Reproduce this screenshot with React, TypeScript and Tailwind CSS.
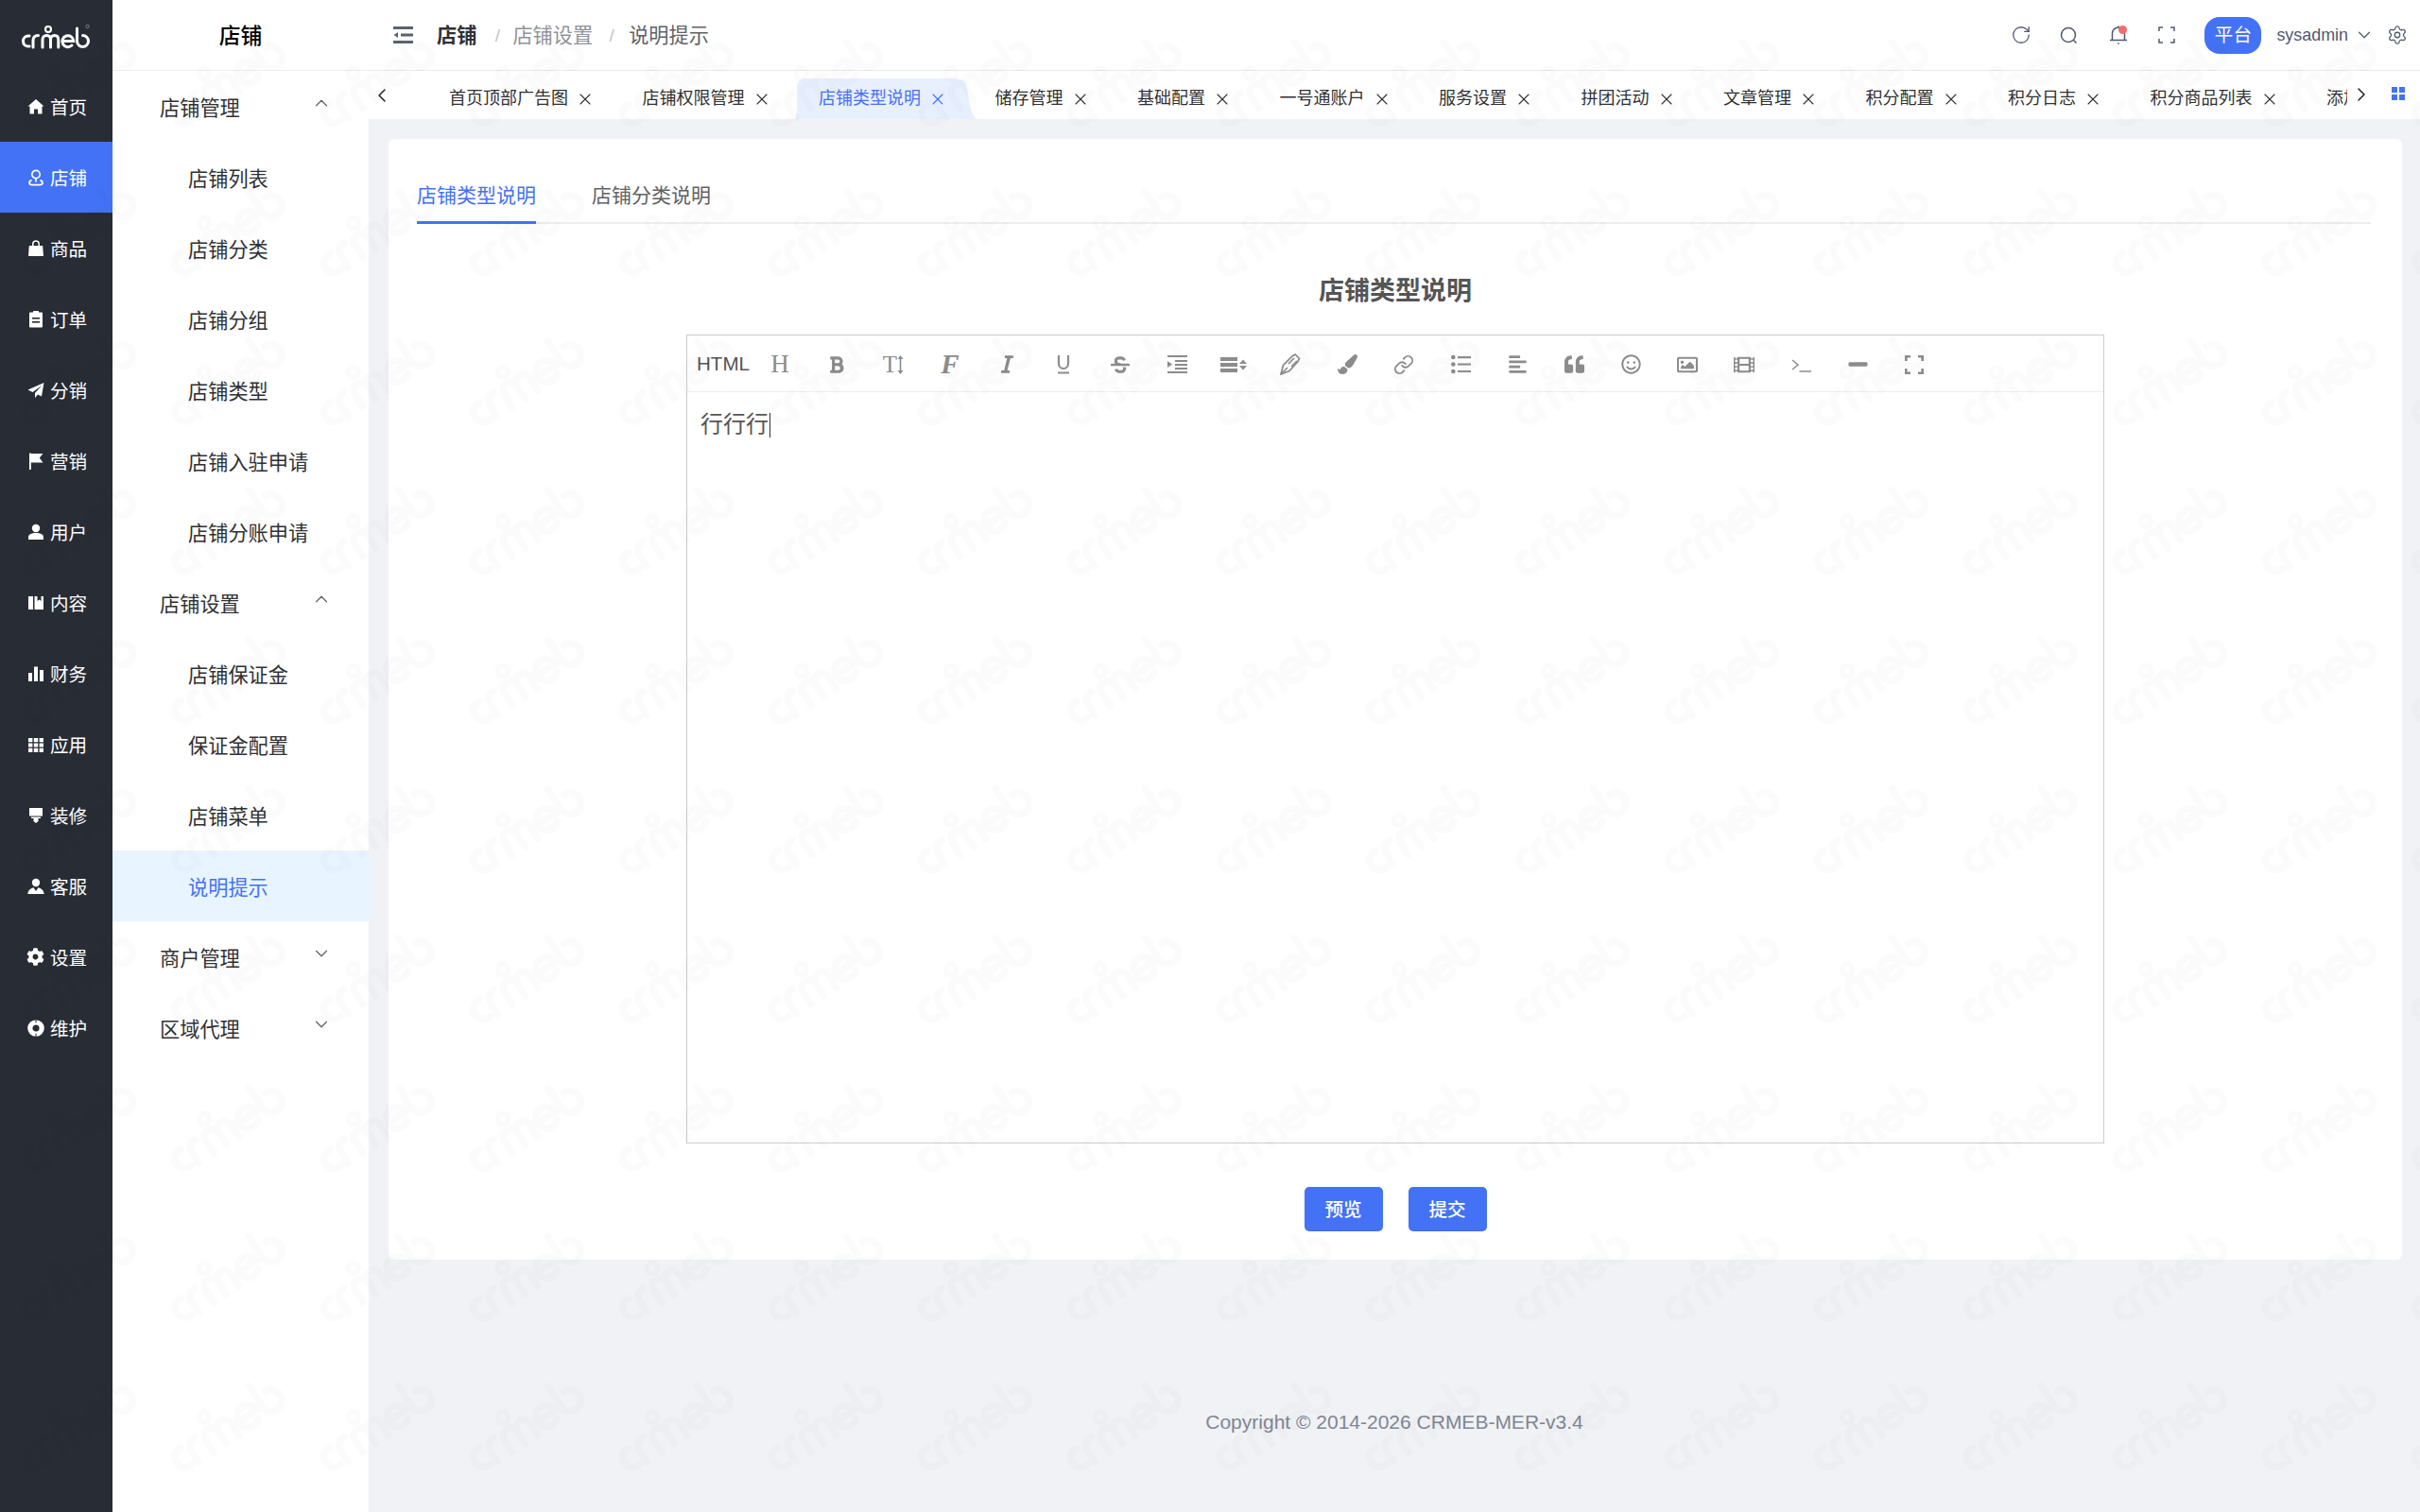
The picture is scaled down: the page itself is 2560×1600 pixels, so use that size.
import type { ReactNode } from "react";
import { ChevronDown, ChevronLeft, ChevronRight, ChevronUp, Link, RotateCw, Settings, X } from "lucide-react";
import {
  FaAlignLeft,
  FaBold,
  FaCog,
  FaFilm,
  FaItalic,
  FaMinus,
  FaPaintBrush,
  FaQuoteLeft,
  FaRegImage,
  FaRegSmile,
  FaStrikethrough,
} from "react-icons/fa";

function Glyph({ children }: { children: ReactNode }) {
  return (
    <svg width="18" height="18" viewBox="0 0 18 18" fill="#fff" className="shrink-0">
      {children}
    </svg>
  );
}

const railItems: { label: string; icon: ReactNode; active?: boolean }[] = [
  { label: "首页", icon: <Glyph><path d="M9 1 17.5 8.5H15.5V16.5H11V11.5H7V16.5H2.5V8.5H.5Z" /></Glyph> },
  {
    label: "店铺",
    active: true,
    icon: (
      <Glyph>
        <g fill="none" stroke="#fff" strokeWidth="1.7">
          <circle cx="9" cy="5.5" r="4.2" />
          <path d="M9 10v3.4M4.5 11.6C1 13 1.3 16.4 5 16.6H13C16.7 16.4 17 13 13.500 11.600" />
        </g>
      </Glyph>
    ),
  },
  {
    label: "商品",
    icon: (
      <Glyph>
        <path d="M1.800 6H16.200L17 17H1Z" />
        <path d="M5.800 6.500V4.200A3.200 3.200 0 0 1 12.200 4.200V6.500" fill="none" stroke="#fff" strokeWidth="1.500" />
      </Glyph>
    ),
  },
  {
    label: "订单",
    icon: (
      <Glyph>
        <rect x="2" y="1.500" width="14" height="16" rx="1" />
        <rect x="6" y="0" width="6" height="3" rx=".5" />
        <rect x="5" y="7" width="8" height="1.600" fill="#282c35" />
        <rect x="5" y="11" width="8" height="1.600" fill="#282c35" />
      </Glyph>
    ),
  },
  { label: "分销", icon: <Glyph><path d="M17.500 1 .5 8.500 5.500 11 15 4 8 12V17L11 13.500 15 15.500Z" /></Glyph> },
  { label: "营销", icon: <Glyph><path d="M2 .5H3.800V18H2ZM3.800 1H16.500L12.800 5.500 16.500 10.500H3.800Z" /></Glyph> },
  {
    label: "用户",
    icon: (
      <Glyph>
        <circle cx="9" cy="5" r="4.200" />
        <path d="M1 17V14.500C1 11.500 4 10 9 10S17 11.500 17 14.500V17Z" />
      </Glyph>
    ),
  },
  { label: "内容", icon: <Glyph><path d="M1 2H6V16H1ZM7.500 2H10.500V7L12.500 5.500 14.500 7V2H17V16H7.500Z" /></Glyph> },
  {
    label: "财务",
    icon: (
      <Glyph>
        <rect x="1" y="8" width="4" height="9" />
        <rect x="7" y="1.500" width="4" height="15.500" />
        <rect x="13" y="5" width="4" height="12" />
      </Glyph>
    ),
  },
  {
    label: "应用",
    icon: (
      <Glyph>
        <path d="M1 2H5.400V6.200H1ZM6.800 2H11.200V6.200H6.800ZM12.600 2H17V6.200H12.600ZM1 7.400H5.400V11.600H1ZM6.800 7.400H11.200V11.600H6.800ZM12.600 7.400H17V11.600H12.600ZM1 12.800H5.400V17H1ZM6.800 12.800H11.200V17H6.800ZM12.600 12.800H17V17H12.600Z" />
      </Glyph>
    ),
  },
  { label: "装修", icon: <Glyph><path d="M2 1H16V9.500H2ZM4 10.500H14V12H11.500V15L9 17 6.500 15V12H4Z" /></Glyph> },
  {
    label: "客服",
    icon: (
      <Glyph>
        <circle cx="9" cy="5" r="4.200" />
        <path d="M.3 17C.8 12.500 4 10.800 6.500 10.200L9 14 11.500 10.200C14 10.800 17.200 12.500 17.700 17Z" />
      </Glyph>
    ),
  },
  { label: "设置", icon: <FaCog className="-ml-[1px] h-[19px] w-[19px] shrink-0 text-white" /> },
  {
    label: "维护",
    icon: (
      <Glyph>
        <circle cx="9" cy="9" r="6.200" fill="none" stroke="#fff" strokeWidth="5.200" />
        <path d="M9 0V3.400M9 14.600V18" stroke="#282c35" strokeWidth="1" />
      </Glyph>
    ),
  },
];

type MenuRow = { label: string; kind: "group" | "item"; open?: boolean; active?: boolean };

const menuRows: MenuRow[] = [
  { label: "店铺管理", kind: "group", open: true },
  { label: "店铺列表", kind: "item" },
  { label: "店铺分类", kind: "item" },
  { label: "店铺分组", kind: "item" },
  { label: "店铺类型", kind: "item" },
  { label: "店铺入驻申请", kind: "item" },
  { label: "店铺分账申请", kind: "item" },
  { label: "店铺设置", kind: "group", open: true },
  { label: "店铺保证金", kind: "item" },
  { label: "保证金配置", kind: "item" },
  { label: "店铺菜单", kind: "item" },
  { label: "说明提示", kind: "item", active: true },
  { label: "商户管理", kind: "group" },
  { label: "区域代理", kind: "group" },
];

const tabs = [
  "首页顶部广告图",
  "店铺权限管理",
  "店铺类型说明",
  "储存管理",
  "基础配置",
  "一号通账户",
  "服务设置",
  "拼团活动",
  "文章管理",
  "积分配置",
  "积分日志",
  "积分商品列表",
  "添加",
];

// crmeb wordmark, also used for the page watermark
function LogoStrokes({ width = 3 }: { width?: number }) {
  return (
    <g fill="none" stroke="currentColor" strokeWidth={width} strokeLinecap="round">
      <path d="M8 13C4 12.500 1.500 15 1.500 18.500S4 24.500 8 24" />
      <path d="M12 25V18C12 14.500 14 12.500 17.500 12.500" />
      <path d="M22 25V17C22 14 24 12.500 26.300 12.500S30.500 14 30.500 17V25M30.500 17C30.500 14 32.500 12.500 34.700 12.500S38.800 14 38.800 17V25" />
      <path d="M42.800 18.500H54.800A6 6 0 1 0 53 23" />
      <path d="M58.500 5V18.500A6 6 0 1 0 64.500 12.500" />
      <circle cx="28" cy="6" r="3" strokeWidth={width * 0.72} />
    </g>
  );
}

function Watermark() {
  return (
    <svg className="pointer-events-none absolute inset-0 z-50 h-full w-full text-black opacity-[0.013]">
      <defs>
        <pattern id="wm" width="158" height="158" y="5" patternUnits="userSpaceOnUse">
          <g transform="translate(80 79) rotate(-33) scale(1.9) translate(-36 -15)">
            <LogoStrokes width={3.8} />
          </g>
        </pattern>
      </defs>
      <rect width="100%" height="100%" fill="url(#wm)" />
    </svg>
  );
}

function Rail() {
  return (
    <aside className="flex w-[119px] shrink-0 flex-col bg-[#282c35]">
      <div className="flex h-[75px] items-start pl-[23px] pt-[25px] text-white">
        <svg width="74" height="27" viewBox="0 0 74 27">
          <LogoStrokes />
          <circle cx="69.500" cy="3" r="1.700" fill="none" stroke="#fff" strokeOpacity=".5" strokeWidth=".7" />
        </svg>
      </div>
      {railItems.map((item) => (
        <div
          key={item.label}
          className={`flex h-[75px] items-center gap-[6px] pl-[29px] text-[19.6px] text-white ${item.active ? "bg-[#4372f6]" : ""}`}
        >
          {item.icon}
          <span className="pt-[4px]">{item.label}</span>
        </div>
      ))}
    </aside>
  );
}

function SubMenu() {
  return (
    <aside className="flex w-[271px] shrink-0 flex-col bg-white">
      <div className="flex h-[75px] items-center justify-center border-b border-[#eee] pt-[2px] text-[22.800px] font-medium text-black">
        店铺
      </div>
      {menuRows.map((row) => (
        <div
          key={row.label}
          className={`flex h-[75px] items-center pt-[4px] text-[21.200px] ${
            row.kind === "group" ? "pl-[50px]" : "pl-[80px]"
          } ${row.active ? "bg-[#e8f4ff] text-[#4372f6]" : "text-[#303133]"}`}
        >
          <span>{row.label}</span>
          {row.kind === "group" &&
            (row.open ? (
              <ChevronUp strokeWidth={1.3} className="ml-auto mr-[39px] h-[22px] w-[22px] -translate-y-[6px] text-[#606266]" />
            ) : (
              <ChevronDown strokeWidth={1.3} className="ml-auto mr-[39px] h-[22px] w-[22px] -translate-y-[6px] text-[#606266]" />
            ))}
        </div>
      ))}
    </aside>
  );
}

function Header() {
  return (
    <header className="flex h-[75px] shrink-0 items-center border-b border-[#e8e8e8] bg-white pl-[26px]">
      <svg width="21" height="18" viewBox="0 0 21 18" className="mr-[25px] shrink-0">
        <path d="M0 0H21V3H0ZM8 7.500H21V10.500H8ZM0 15H21V18H0ZM5 6V12L.5 9Z" fill="#5c6270" />
      </svg>
      <span className="pt-[2px] text-[21.200px] font-semibold text-[#303133]">店铺</span>
      <span className="ml-[19px] mr-[13px] w-[6px] pt-[2px] text-center text-[19px] text-[#c0c4cc]">/</span>
      <span className="pt-[2px] text-[21.200px] text-[#909399]">店铺设置</span>
      <span className="ml-[17px] mr-[15px] w-[6px] pt-[2px] text-center text-[19px] text-[#c0c4cc]">/</span>
      <span className="pt-[2px] text-[21.200px] text-[#606266]">说明提示</span>

      <RotateCw strokeWidth={1.4} className="ml-auto h-[22px] w-[22px] text-[#515a6e]" />
      <svg width="19" height="19" viewBox="0 0 19 19" fill="none" stroke="#515a6e" strokeWidth="1.500" className="ml-[30px]">
        <circle cx="9" cy="9" r="7.500" />
        <path d="M14.500 14.500 17.500 17.500" />
      </svg>
      <div className="relative ml-[33px] h-[22px] w-[20px]">
        <svg width="20" height="22" viewBox="0 0 20 22" fill="none" stroke="#515a6e" strokeWidth="1.500">
          <path d="M3.500 16V9.500A6.500 6.500 0 0 1 16.500 9.500V16M1 16.500H19M10 1.500V3M9.200 20H10.800" />
        </svg>
        <span className="absolute left-[10px] top-[1px] h-[9px] w-[9px] rounded-full bg-[#f56c6c]" />
      </div>
      <svg width="18" height="18" viewBox="0 0 18 18" fill="none" stroke="#515a6e" strokeWidth="1.500" className="ml-[32px]">
        <path d="M1 5V1H5M13 1H17V5M17 13V17H13M5 17H1V13" />
      </svg>
      <div className="ml-[31px] flex h-[39px] w-[60px] items-center justify-center rounded-[16px] bg-[#4372f6] pt-[1px] text-[19.600px] text-white">
        平台
      </div>
      <span className="ml-[16px] text-[17.900px] text-[#515a6e]">sysadmin</span>
      <ChevronDown strokeWidth={1.3} className="ml-[6px] h-[22px] w-[22px] text-[#515a6e]" />
      <Settings strokeWidth={1.4} className="ml-[13px] mr-[13px] h-[22px] w-[22px] text-[#515a6e]" />
    </header>
  );
}

function TabBar() {
  return (
    <div className="flex h-[51px] shrink-0 bg-white">
      <div className="flex w-[60px] shrink-0 items-start pt-[14px]">
        <ChevronLeft strokeWidth={1.5} className="ml-[2px] h-[24px] w-[24px] text-[#222]" />
      </div>
      <div className="flex flex-1 overflow-hidden pt-[8px]">
        {tabs.map((tab) => {
          const active = tab === "店铺类型说明";
          return (
            <div
              key={tab}
              className={`relative flex h-[43px] shrink-0 items-center pl-[25px] pr-[25.500px] text-[18px] ${
                active ? "text-[#4372f6]" : "text-[#303133]"
              }`}
            >
              {active && (
                <svg width="192" height="43" viewBox="0 0 192 43" className="absolute left-0 top-0">
                  <path d="M0 43C2 40 2 36 2 10Q2 0 12 0H170Q180 0 182 10C184 24 186 38 192 43Z" fill="#e8efff" />
                </svg>
              )}
              <span className="relative whitespace-nowrap">{tab}</span>
              <X strokeWidth={1.3} className="relative ml-[8px] h-[20px] w-[20px]" />
            </div>
          );
        })}
      </div>
      <div className="flex w-[77px] shrink-0 items-start pt-[13px]">
        <ChevronRight strokeWidth={1.5} className="ml-[3px] h-[24px] w-[24px] text-[#222]" />
        <svg width="14" height="14" viewBox="0 0 14 14" fill="#4372f6" className="ml-[20px] mt-[4px]">
          <path d="M0 0H6V6H0ZM8 0H14V6H8ZM0 8H6V14H0ZM8 8H14V14H8Z" />
        </svg>
      </div>
    </div>
  );
}

const tools: ReactNode[] = [
  <span className="[font-family:'Liberation_Serif',serif] text-[27px] leading-none">H</span>,
  <FaBold className="h-[20px] w-[20px]" />,
  <span className="flex items-center [font-family:'Liberation_Serif',serif] text-[25px] leading-none">
    T
    <svg width="7" height="20" viewBox="0 0 7 20" fill="currentColor">
      <path d="M3.500 0 6.500 4H4.300V16H6.500L3.500 20 .5 16H2.700V4H.5Z" />
    </svg>
  </span>,
  <span className="[font-family:'Liberation_Serif',serif] text-[29px] font-bold italic leading-none">F</span>,
  <FaItalic className="h-[21px] w-[21px]" />,
  <svg width="18" height="21" viewBox="0 0 18 21" fill="none" stroke="currentColor" strokeWidth="2.200">
    <path d="M4 1V10A5 5 0 0 0 14 10V1M3 19.500H15" />
  </svg>,
  <FaStrikethrough className="h-[20px] w-[20px]" />,
  <svg width="21" height="21" viewBox="0 0 21 21" fill="currentColor">
    <path d="M0 1H21V3H0ZM8 6H21V8H8ZM8 10H21V12H8ZM8 14H21V16H8ZM0 18H21V20H0ZM0 7 5 10.500 0 14Z" />
  </svg>,
  <svg width="28" height="18" viewBox="0 0 28 18" fill="currentColor">
    <path d="M0 1H18V5H0ZM0 7H18V11H0ZM0 13H18V17H0ZM24 3.500 28 8H20ZM24 14.500 20 10H28Z" />
  </svg>,
  <svg width="22" height="23" viewBox="0 0 22 23" fill="none" stroke="currentColor" strokeWidth="1.700">
    <path d="M1 22 3.500 12.500 13 3 16 1 20.500 5.500 19 8.500 10 18.500Z" />
    <path d="M1 22 8 15M9 11 15 5M12 14 18 8" />
  </svg>,
  <FaPaintBrush className="h-[21px] w-[21px]" />,
  <Link strokeWidth={2} className="h-[22px] w-[22px]" />,
  <svg width="21" height="21" viewBox="0 0 21 21" fill="currentColor">
    <circle cx="2.300" cy="3" r="2.300" />
    <circle cx="2.300" cy="10.500" r="2.300" />
    <circle cx="2.300" cy="18" r="2.300" />
    <path d="M7 2H21V4.200H7ZM7 9.400H21V11.600H7ZM7 16.900H21V19H7Z" />
  </svg>,
  <FaAlignLeft className="h-[21px] w-[21px]" />,
  <FaQuoteLeft className="h-[21px] w-[21px]" />,
  <FaRegSmile className="h-[21px] w-[21px]" />,
  <FaRegImage className="h-[22px] w-[22px]" />,
  <FaFilm className="h-[22px] w-[22px]" />,
  <svg width="21" height="18" viewBox="0 0 21 18" fill="none" stroke="currentColor" strokeWidth="1.500">
    <path d="M1 4 7 9 1 14M8.500 16H21" />
  </svg>,
  <FaMinus className="h-[23px] w-[23px]" />,
  <svg width="20" height="20" viewBox="0 0 20 20" fill="none" stroke="currentColor" strokeWidth="2.600">
    <path d="M1.300 6V1.300H6M14 1.300H18.700V6M18.700 14V18.700H14M6 18.700H1.300V14" />
  </svg>,
];

function Editor() {
  return (
    <div className="mx-auto mt-[26px] flex h-[856px] w-[1500px] flex-col border-[1.500px] border-[#ccc]">
      <div className="flex h-[60px] shrink-0 items-center border-b border-[#eee] pl-[10px] pt-[2px] text-[#8c8c8c]">
        <span className="w-[58px] shrink-0 text-[20.600px] text-[#555]">HTML</span>
        {tools.map((tool, i) => (
          <span key={i} className="flex h-[58px] w-[60px] shrink-0 items-center justify-center">
            {tool}
          </span>
        ))}
      </div>
      <div className="pl-[14px] pt-[16px] text-[24px] leading-[36px] text-[#555]">
        行行行<span className="ml-px inline-block h-[26px] w-px translate-y-[6px] bg-[#333]" />
      </div>
    </div>
  );
}

export default function App() {
  return (
    <div className="relative flex h-[1600px] w-[2560px] overflow-hidden bg-[#f0f2f5] [font-family:'Liberation_Sans','Noto_Sans_CJK_SC',sans-serif]">
      <Rail />
      <SubMenu />
      <div className="flex min-w-0 flex-1 flex-col">
        <Header />
        <TabBar />
        <main className="ml-[21px] mr-[19px] mt-[21px] rounded-[6px] bg-white px-[30px] pb-[30px] pt-[45px]">
          <div className="mr-[3px] flex gap-[59px] border-b-2 border-[#eceef2] text-[21px]">
            <span className="-mb-[2px] border-b-[3px] border-[#4372f6] pb-[12px] leading-[30px] text-[#4372f6]">店铺类型说明</span>
            <span className="pb-[12px] leading-[30px] text-[#606266]">店铺分类说明</span>
          </div>
          <h2 className="mt-[51px] text-center text-[27px] font-bold leading-[40px] text-[#555]">店铺类型说明</h2>
          <Editor />
          <div className="mt-[46px] flex justify-center gap-[27px]">
            <button className="h-[47px] w-[83px] rounded-[5px] bg-[#4372f6] pt-[2px] text-[19.600px] font-medium text-white">预览</button>
            <button className="h-[47px] w-[83px] rounded-[5px] bg-[#4372f6] pt-[2px] text-[19.600px] font-medium text-white">提交</button>
          </div>
        </main>
        <footer className="mt-[157px] text-center text-[21px] leading-[30px] text-[#808695]">
          Copyright © 2014-2026 CRMEB-MER-v3.4
        </footer>
      </div>
      <Watermark />
    </div>
  );
}
